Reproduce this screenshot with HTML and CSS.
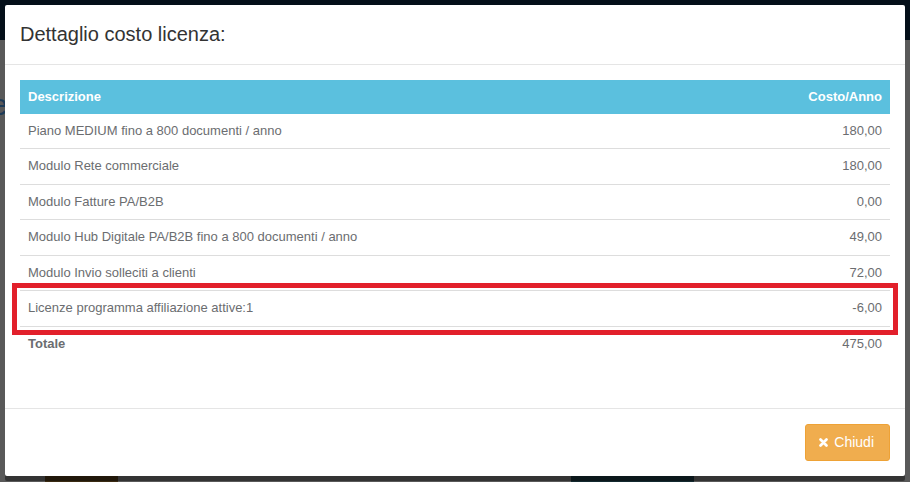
FILE: index.html
```html
<!DOCTYPE html>
<html lang="it">
<head>
<meta charset="utf-8">
<title>Dettaglio costo licenza</title>
<link rel="stylesheet" href="styles.css">
</head>
<body>
<div class="page">
  <div class="topbar"></div>
  <span class="bg-letter">e</span>
  <div class="bg-btn bg-btn-warn"></div>
  <div class="bg-btn bg-btn-info"></div>
</div>

<div class="modal">
  <div class="modal-header">
    <h4 class="modal-title">Dettaglio costo licenza:</h4>
  </div>
  <div class="modal-body">
    <table class="cost-table">
      <thead>
        <tr><th class="col-desc">Descrizione</th><th class="col-cost">Costo/Anno</th></tr>
      </thead>
      <tbody>
        <tr><td>Piano MEDIUM fino a 800 documenti / anno</td><td class="col-cost">180,00</td></tr>
        <tr><td>Modulo Rete commerciale</td><td class="col-cost">180,00</td></tr>
        <tr><td>Modulo Fatture PA/B2B</td><td class="col-cost">0,00</td></tr>
        <tr><td>Modulo Hub Digitale PA/B2B fino a 800 documenti / anno</td><td class="col-cost">49,00</td></tr>
        <tr><td>Modulo Invio solleciti a clienti</td><td class="col-cost">72,00</td></tr>
        <tr><td>Licenze programma affiliazione attive:1</td><td class="col-cost">-6,00</td></tr>
        <tr class="total-row"><td>Totale</td><td class="col-cost">475,00</td></tr>
      </tbody>
    </table>
  </div>
  <div class="modal-footer">
    <button class="btn-close" type="button"><svg class="icon-x" viewBox="0 0 10 10" width="9" height="9" aria-hidden="true"><path d="M1.7 1.7 L8.3 8.3 M8.3 1.7 L1.7 8.3" stroke="#fff" stroke-width="3" stroke-linecap="round"/></svg>Chiudi</button>
  </div>
</div>

<div class="highlight"></div>
</body>
</html>
```

FILE: styles.css
```css
* { box-sizing: border-box; }

html, body {
  margin: 0;
  padding: 0;
}

body {
  width: 910px;
  height: 482px;
  overflow: hidden;
  background: #595959;
  font-family: "Liberation Sans", Arial, sans-serif;
  position: relative;
}

.page {
  position: absolute;
  inset: 0;
}

.topbar {
  height: 40px;
  background: #040f19;
}

.bg-letter {
  position: absolute;
  left: -9px;
  top: 88px;
  font-size: 30px;
  color: #1d3b58;
  font-family: "Liberation Sans", Arial, sans-serif;
}

.bg-btn {
  position: absolute;
  top: 474px;
  height: 10px;
}

.bg-btn-warn {
  left: 45px;
  width: 73px;
  background: #3a2a12;
}

.bg-btn-info {
  left: 571px;
  width: 123px;
  background: #13292f;
}

.modal {
  position: absolute;
  left: 5px;
  top: 5px;
  width: 900px;
  background: #fff;
  border-radius: 2px;
  box-shadow: 0 5px 0 rgba(0, 0, 0, 0.42);
}

.modal-header {
  padding: 15px;
  border-bottom: 1px solid #e5e5e5;
}

.modal-title {
  margin: 0;
  font-size: 20px;
  font-weight: normal;
  line-height: 28.57px;
  color: #333;
}

.modal-body {
  padding: 15px;
}

.cost-table {
  width: 100%;
  border-collapse: collapse;
  border-spacing: 0;
  margin-bottom: 31px;
  font-size: 13px;
  line-height: 18.57px;
  color: #6b6d70;
}

.cost-table th {
  background: #5bc0de;
  color: #fff;
  font-weight: bold;
  text-align: left;
  padding: 8px 8px 7.5px;
}

.cost-table td {
  padding: 8px;
  border-bottom: 1px solid #dddddd;
}

.cost-table .col-cost {
  text-align: right;
}

.cost-table .total-row td {
  border-bottom: 0;
  font-weight: bold;
}

.cost-table .total-row .col-cost {
  font-weight: normal;
}

.modal-footer {
  border-top: 1px solid #e5e5e5;
  padding: 15px;
  display: flex;
  justify-content: flex-end;
}

.btn-close {
  display: inline-flex;
  align-items: center;
  height: 37px;
  padding: 0 15px 0 13px;
  background: #f0ad4e;
  border: 1px solid #eea236;
  border-radius: 3px;
  color: #fff;
  font-family: "Liberation Sans", Arial, sans-serif;
  font-size: 14px;
  line-height: 19px;
  cursor: pointer;
}

.icon-x {
  margin-right: 6px;
  flex: none;
}

.highlight {
  position: absolute;
  left: 12px;
  top: 283px;
  width: 886px;
  height: 52px;
  border: 5px solid #e2202b;
}
```
